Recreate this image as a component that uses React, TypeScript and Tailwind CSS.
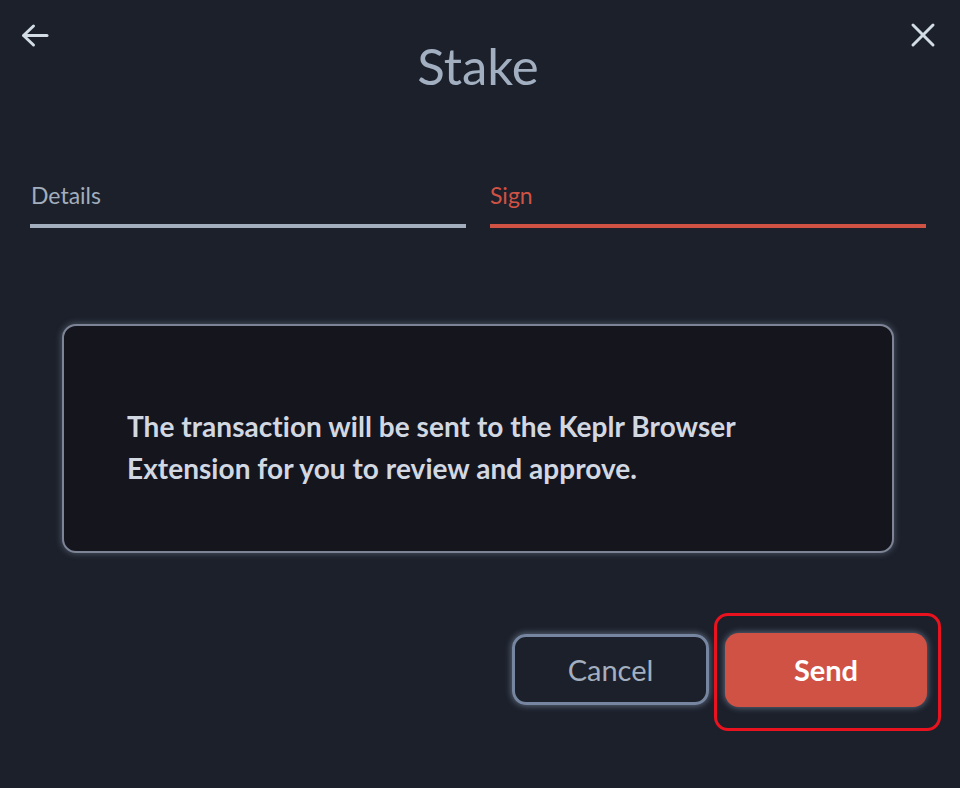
import React from 'react';

export default function App() {
  return (
    <div className="w-[960px] h-[788px] bg-[#1b202b] text-[#a0abbd] relative overflow-hidden" style={{ fontFamily: 'Lato, "Noto Sans", sans-serif' }}>
      {/* Header */}
      <div className="relative h-[140px]">
        <button className="absolute left-[20px] top-[22px] text-[#d3dbe5]">
          <svg width="30" height="28" viewBox="0 0 30 28" fill="none" stroke="currentColor" strokeWidth="3" strokeLinecap="round" strokeLinejoin="round">
            <path d="M27 13.5H4" />
            <path d="M13.5 4L3.5 13.5L13.5 23" />
          </svg>
        </button>
        <h1 className="absolute left-0 right-0 top-[36px] text-center text-[51px] leading-[60px] text-[#a2afc1] pr-[4px]">Stake</h1>
        <button className="absolute right-[24px] top-[22px] text-[#d3dbe5]">
          <svg width="26" height="26" viewBox="0 0 26 26" fill="none" stroke="currentColor" strokeWidth="3" strokeLinecap="round">
            <path d="M3 3L23 23" />
            <path d="M23 3L3 23" />
          </svg>
        </button>
      </div>

      {/* Tabs */}
      <div className="flex gap-[24px] pl-[30px] pr-[34px] mt-[40px]">
        <div className="flex-1">
          <div className="text-[23px] leading-[30px] pl-[1px] text-[#a2aebd]">Details</div>
          <div className="h-[4px] bg-[#a2aebd] mt-[14px]" />
        </div>
        <div className="flex-1">
          <div className="text-[23px] leading-[30px] text-[#d05244]">Sign</div>
          <div className="h-[4px] bg-[#d05244] mt-[14px]" />
        </div>
      </div>

      {/* Info card */}
      <div className="ml-[62px] mt-[96px] w-[832px] h-[229px] rounded-[14px] bg-[#15151e] border-2 border-[#7d8496] shadow-[0_0_6px_1px_rgba(160,170,190,0.35)] flex items-center pl-[63px] pr-[20px] pt-[16px]">
        <p className="text-[28px] leading-[42px] font-bold text-[#d2d8e2] tracking-[0.05px]">
          The transaction will be sent to the Keplr Browser
          <br />
          Extension for you to review and approve.
        </p>
      </div>

      {/* Actions */}
      <div className="flex justify-end gap-[16px] pr-[33px] mt-[80px]">
        <button className="w-[197px] h-[71px] rounded-[14px] border-[3px] border-[#7686a0] shadow-[0_0_6px_1px_rgba(170,185,210,0.45)] text-[29px] text-[#a3aebf] mt-[1px]">
          Cancel
        </button>
        <div className="relative">
          <button className="w-[202px] h-[74px] rounded-[14px] bg-[#d05244] shadow-[0_0_6px_1px_rgba(170,185,210,0.45)] text-[29px] font-bold text-white">
            Send
          </button>
          <div className="absolute left-[-11px] top-[-20px] w-[227px] h-[118px] rounded-[14px] border-[3px] border-[#e8131f] pointer-events-none" />
        </div>
      </div>
    </div>
  );
}
